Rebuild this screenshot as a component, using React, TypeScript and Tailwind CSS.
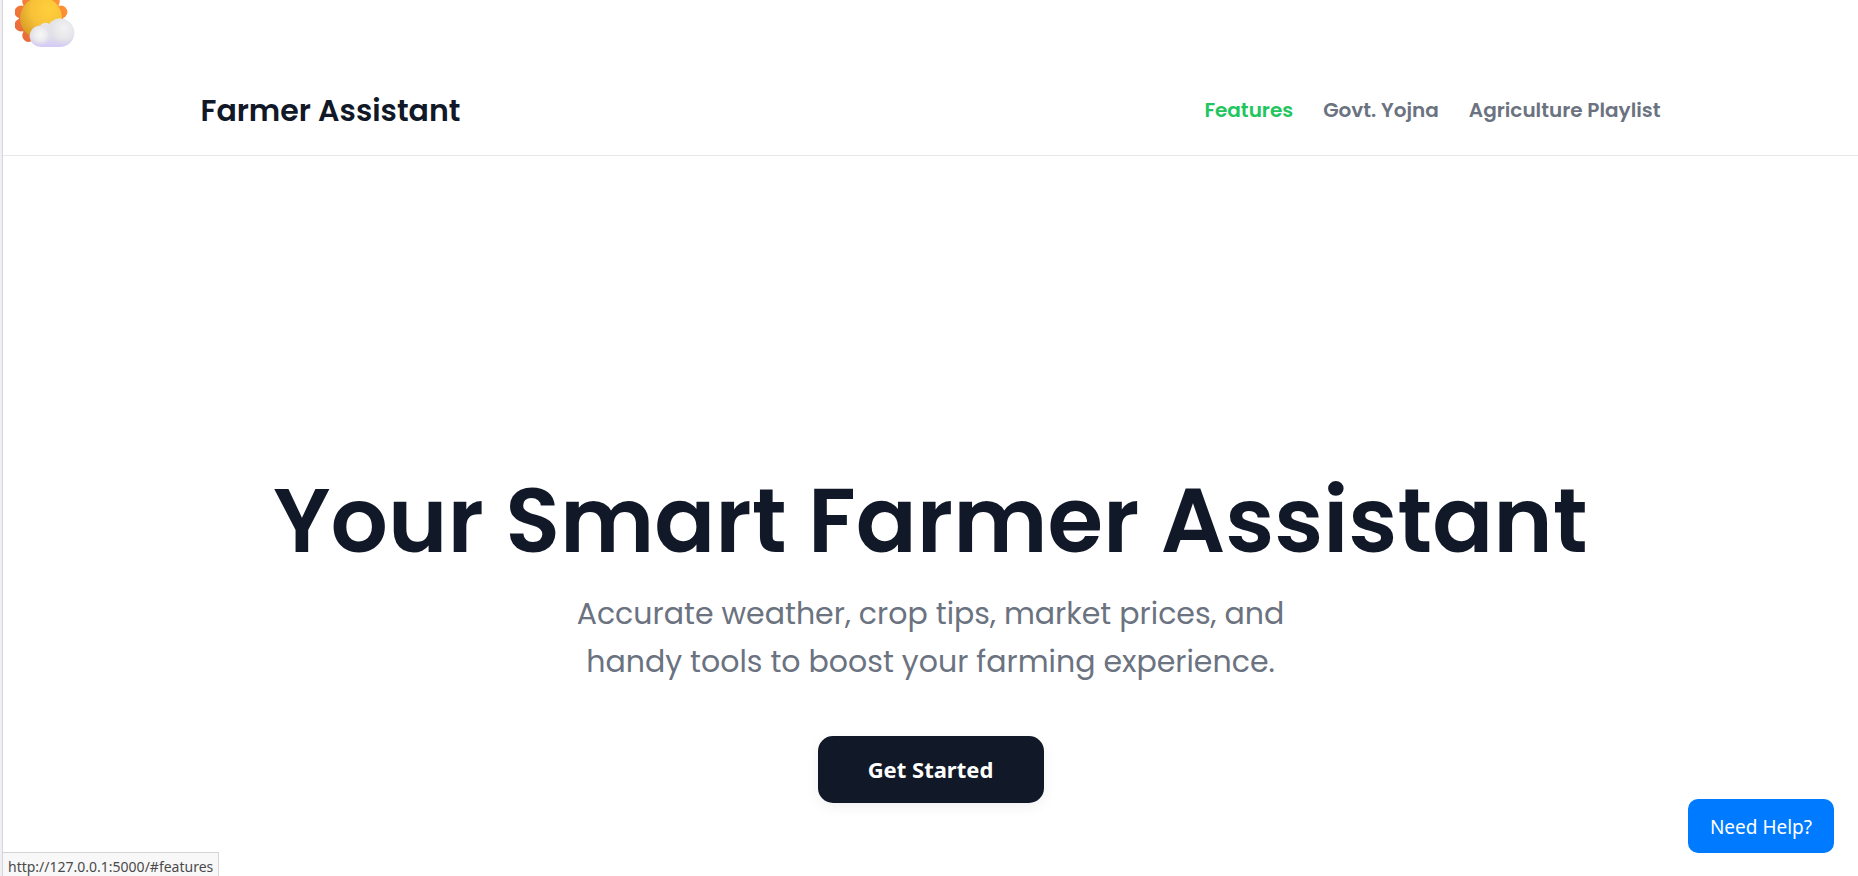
const links = [
  { label: "Features", href: "#features", active: true },
  { label: "Govt. Yojna", href: "#yojna", active: false },
  { label: "Agriculture Playlist", href: "#playlist", active: false },
];

function WeatherIcon() {
  const petals = Array.from({ length: 10 }, (_, i) => {
    const a = ((i * 36 + 18) * Math.PI) / 180;
    return { x: 26 + 21 * Math.cos(a), y: 18.5 + 21 * Math.sin(a) };
  });
  return (
    <svg width="64" height="48" viewBox="0 0 64 48" role="img" aria-label="Partly sunny">
      <defs>
        <linearGradient id="petal" gradientUnits="userSpaceOnUse" x1="8" y1="42" x2="48" y2="2">
          <stop offset="0" stopColor="#e8693a" />
          <stop offset="0.5" stopColor="#f57c38" />
          <stop offset="1" stopColor="#ff9433" />
        </linearGradient>
        <radialGradient id="sun" cx="0.68" cy="0.3" r="0.75">
          <stop offset="0" stopColor="#ffcf3c" />
          <stop offset="0.55" stopColor="#f8c238" />
          <stop offset="1" stopColor="#d99f28" />
        </radialGradient>
        <linearGradient id="base" x1="0" y1="0" x2="0" y2="1">
          <stop offset="0" stopColor="#e8e7ea" />
          <stop offset="0.6" stopColor="#e2e0e9" />
          <stop offset="1" stopColor="#d3caf6" />
        </linearGradient>
        <radialGradient id="puffLeft" cx="0.5" cy="0.45" r="0.55">
          <stop offset="0" stopColor="#f7f6f8" />
          <stop offset="0.6" stopColor="#eae9ed" />
          <stop offset="1" stopColor="#dfdce9" stopOpacity="0" />
        </radialGradient>
        <radialGradient id="puffRight" cx="0.65" cy="0.35" r="0.65">
          <stop offset="0" stopColor="#f2f1f3" />
          <stop offset="0.6" stopColor="#e6e5e9" />
          <stop offset="1" stopColor="#dbd8e6" stopOpacity="0" />
        </radialGradient>
      </defs>
      <g fill="url(#petal)">
        <circle cx="26" cy="18.5" r="22" />
        {petals.map((p, i) => (
          <circle key={i} cx={p.x} cy={p.y} r="6.4" />
        ))}
      </g>
      <circle cx="26" cy="18" r="21" fill="url(#sun)" />
      <path
        d="M26 47A11.500 11.500 0 0 1 14.500 36.500A10.500 10.500 0 0 1 25 25.800A6 5.500 0 0 1 34 24A14.200 14.200 0 1 1 45 47Z"
        fill="url(#base)"
      />
      <circle cx="25.500" cy="35.500" r="10.300" fill="url(#puffLeft)" />
      <circle cx="45" cy="32.500" r="13.800" fill="url(#puffRight)" />
    </svg>
  );
}

export default function App() {
  return (
    <div className="flex min-h-screen bg-[#f0f0f4] pl-0.5 font-['Poppins','Inter',sans-serif] text-[#111827]">
      <div className="flex grow flex-col border-l border-[#d5d5da] bg-white">
        <div className="flex h-16 items-start pl-3">
          <WeatherIcon />
        </div>
        <header className="border-b border-[#e5e7eb] px-6">
          <div className="mx-auto flex h-[91px] max-w-[1460px] items-center justify-between">
            <a href="#home" className="pt-0.5 text-3xl font-semibold">
              Farmer Assistant
            </a>
            <nav className="flex gap-[30px] text-xl font-semibold">
              {links.map((link) => (
                <a key={link.label} href={link.href} className={link.active ? "text-[#22c55e]" : "text-[#6b7280]"}>
                  {link.label}
                </a>
              ))}
            </nav>
          </div>
        </header>
        <main className="flex flex-col items-center px-6 pt-[316px] text-center">
          <h1 className="text-[90px] leading-[98px] font-semibold">Your Smart Farmer Assistant</h1>
          <p className="mt-5 max-w-[740px] text-3xl leading-[48px] text-[#6b7280]">
            Accurate weather, crop tips, market prices, and handy tools to boost your farming experience.
          </p>
          <button
            type="button"
            className="mt-[50px] h-[67px] w-[226px] rounded-[15px] bg-[#111827] font-['Noto_Sans',sans-serif] text-[22px] font-bold text-white shadow-[0_4px_14px_rgba(0,0,0,0.06)]"
          >
            Get Started
          </button>
        </main>
      </div>
      <button
        type="button"
        className="fixed right-6 bottom-[23px] h-[54px] w-[146px] rounded-[10px] bg-[#007bff] pt-0.5 font-['Noto_Sans',sans-serif] text-[19px] text-white"
      >
        Need Help?
      </button>
      <div className="fixed bottom-0 left-0.5 h-6 border border-b-0 border-[#d5d5d8] bg-[#f8f8f8] px-[5px] pt-0.5 font-['Noto_Sans',sans-serif] text-sm leading-6 text-[#4a4a4a]">
        http://127.0.0.1:5000/#features
      </div>
    </div>
  );
}
